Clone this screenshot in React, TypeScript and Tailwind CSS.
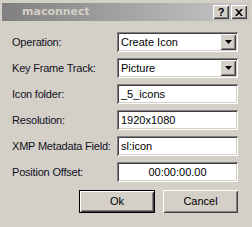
import React from "react";

const sunken =
  "shadow-[inset_1px_1px_0_#808080,inset_-1px_-1px_0_#ffffff,inset_2px_2px_0_#404040,inset_-2px_-2px_0_#d4d0c8]";
const raised =
  "shadow-[inset_1px_1px_0_#ffffff,inset_-1px_-1px_0_#404040,inset_2px_2px_0_#d4d0c8,inset_-2px_-2px_0_#808080]";

const font = { fontFamily: '"Liberation Sans", Arial, sans-serif' };

function DropArrow() {
  return (
    <svg width="7" height="4" viewBox="0 0 7 4">
      <path d="M0 0h7L3.5 4z" fill="#000" />
    </svg>
  );
}

function Combo({ value }: { value: string }) {
  return (
    <div className={`flex h-[20px] w-[121px] items-center bg-white p-[2px] ${sunken}`}>
      <span className="flex-1 pl-[2px] text-[11px] leading-none text-black">{value}</span>
      <div className={`flex h-[16px] w-[16px] items-center justify-center bg-[#d4d0c8] ${raised}`}>
        <DropArrow />
      </div>
    </div>
  );
}

function Field({ value, center }: { value: string; center?: boolean }) {
  return (
    <div
      className={`flex h-[20px] w-[121px] items-center bg-white px-[4px] ${sunken} ${
        center ? "justify-center" : ""
      }`}
    >
      <span className="text-[11px] leading-none text-black">{value}</span>
    </div>
  );
}

const rows: { label: string; kind: "combo" | "field"; value: string; center?: boolean }[] = [
  { label: "Operation:", kind: "combo", value: "Create Icon" },
  { label: "Key Frame Track:", kind: "combo", value: "Picture" },
  { label: "Icon folder:", kind: "field", value: "_5_icons" },
  { label: "Resolution:", kind: "field", value: "1920x1080" },
  { label: "XMP Metadata Field:", kind: "field", value: "sl:icon" },
  { label: "Position Offset:", kind: "field", value: "00:00:00.00", center: true },
];

function TitleButton({ children }: { children: React.ReactNode }) {
  return (
    <div
      className={`flex h-[14px] w-[16px] items-center justify-center bg-[#d4d0c8] text-[11px] font-bold leading-none text-black ${raised}`}
    >
      {children}
    </div>
  );
}

export default function App() {
  return (
    <div className="h-[227px] w-[252px] overflow-hidden bg-[#d4d0c8] pl-[2px] pr-[3px] pt-[3px]" style={font}>
      {/* title bar */}
      <div className="flex h-[18px] items-center bg-gradient-to-r from-[#808080] to-[#c8c8c8] pl-[20px] pr-[2px]">
        <span className="flex-1 text-[11px] font-bold text-[#d4d0c8]" style={{ fontFamily: '"DejaVu Sans", sans-serif' }}>
          maconnect
        </span>
        <div className="flex gap-[2px]">
          <TitleButton>?</TitleButton>
          <TitleButton>
            <svg width="8" height="7" viewBox="0 0 8 7">
              <path d="M0 0h2l2 2.2L6 0h2L5 3.5 8 7H6L4 4.8 2 7H0l3-3.5z" fill="#000" />
            </svg>
          </TitleButton>
        </div>
      </div>

      {/* form */}
      <div className="flex flex-col gap-[6px] pl-[10px] pt-[11px]">
        {rows.map((r) => (
          <div key={r.label} className="flex items-center">
            <span className="w-[105px] text-[11px] tracking-[-0.2px] text-[#10101c]">{r.label}</span>
            {r.kind === "combo" ? <Combo value={r.value} /> : <Field value={r.value} center={r.center} />}
          </div>
        ))}
      </div>

      {/* buttons */}
      <div className="flex justify-end gap-[8px] pr-[11px] pt-[8px]">
        <div className="border border-black">
          <div className={`flex h-[21px] w-[74px] items-center justify-center bg-[#d4d0c8] text-[11px] text-black ${raised}`}>
            Ok
          </div>
        </div>
        <div className={`flex h-[23px] w-[75px] items-center justify-center bg-[#d4d0c8] text-[11px] text-black ${raised}`}>
          Cancel
        </div>
      </div>
    </div>
  );
}
